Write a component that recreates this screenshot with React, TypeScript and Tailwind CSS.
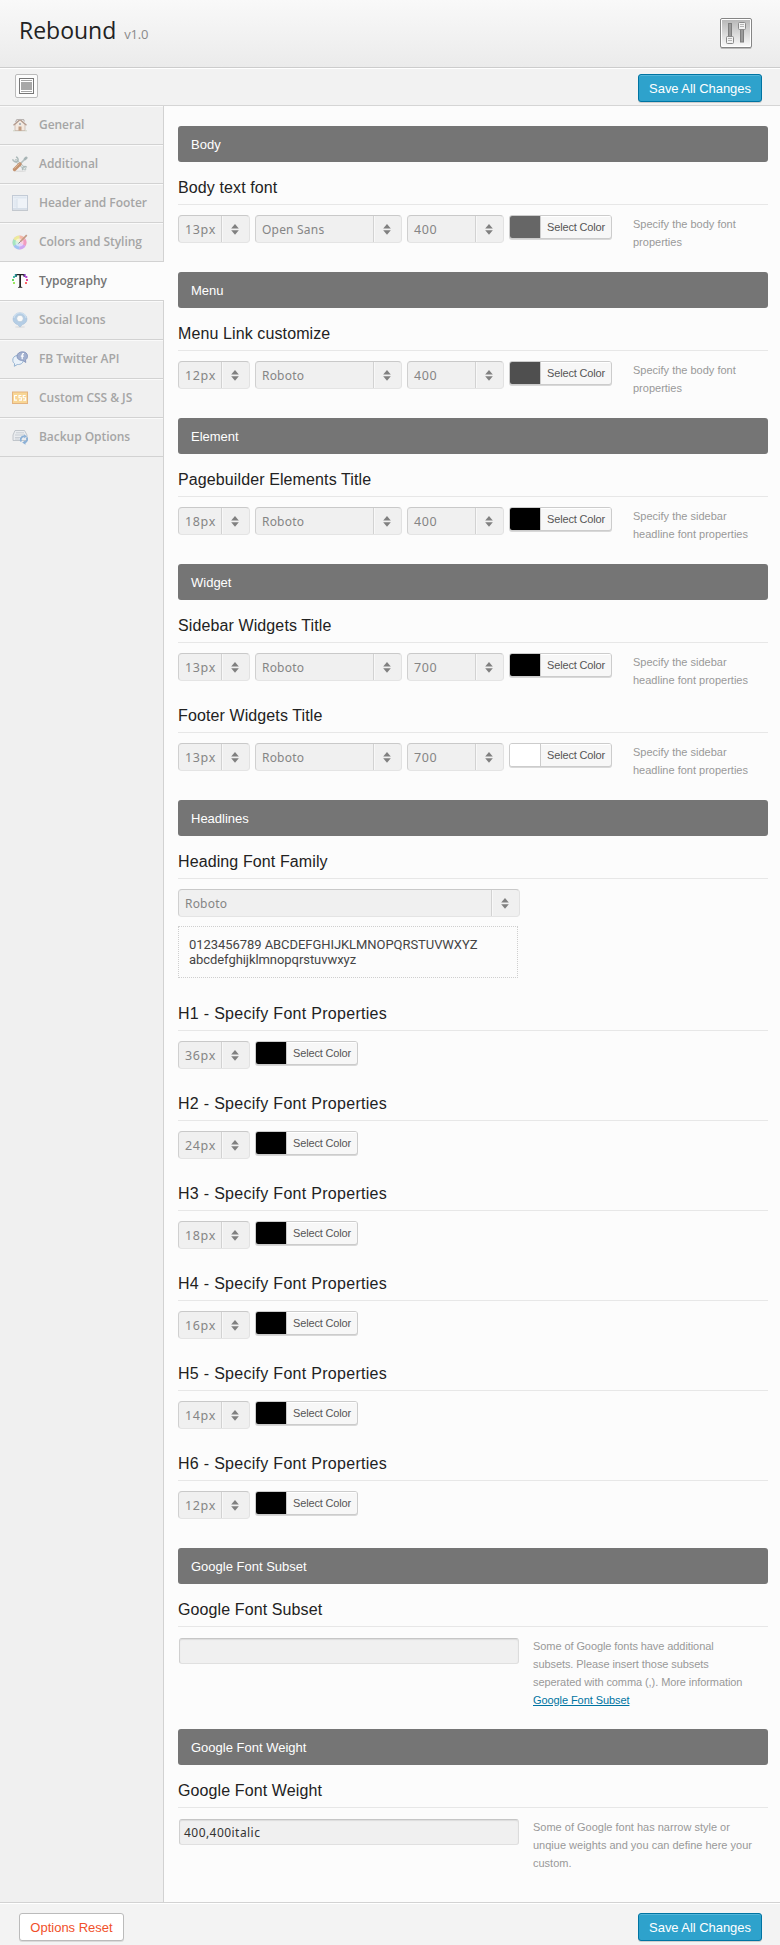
import React from "react";

const Svg = ({ children }: { children: React.ReactNode }) => (
  <svg width="16" height="16" viewBox="0 0 16 16" className="block shrink-0">
    {children}
  </svg>
);

const icons: Record<string, React.ReactNode> = {
  General: (
    <Svg>
      <rect x="1" y="13" width="14" height="1.4" fill="#d9ddd2" />
      <path d="M3 7.500 8 3l5 4.500V13.500H3z" fill="#f3e9e0" stroke="#c4b3a8" strokeWidth=".7" />
      <path d="M1.500 8.200 8 2.500l6.500 5.700" fill="none" stroke="#b39a8d" strokeWidth="1.300" />
      <path d="M3.500 5 5 2.500h6.500l1 2" fill="none" stroke="#b9b4b2" strokeWidth="1.200" />
      <rect x="6.500" y="9.500" width="3" height="4.200" fill="#c19c81" />
      <circle cx="8" cy="7" r="1" fill="#9aa6b3" />
    </Svg>
  ),
  Additional: (
    <Svg>
      <ellipse cx="8" cy="15.200" rx="6" ry=".7" fill="#dedede" />
      <path d="M4 4.500 13 13" stroke="#aebbbb" strokeWidth="2.600" strokeLinecap="round" />
      <path d="M4 4.500 13 13" stroke="#e2e8e7" strokeWidth="1.200" strokeLinecap="round" />
      <path d="M.8 3.200a2.800 2.800 0 0 0 5.200 1.300A2.800 2.800 0 0 0 4 1" fill="none" stroke="#adbaba" strokeWidth="1.500" />
      <path d="M11 14.200a2.300 2.300 0 0 1 3.700-2.800" fill="none" stroke="#adbaba" strokeWidth="1.300" />
      <path d="M13.800 2.200 8.500 7.500" stroke="#b4c0c1" strokeWidth="1.600" strokeLinecap="round" />
      <path d="M14.300 1.800 13 3" stroke="#a8b5b6" strokeWidth="2.600" strokeLinecap="round" />
      <path d="M8 8 2.500 13.500" stroke="#c3926f" strokeWidth="3.400" strokeLinecap="round" />
      <path d="M7.500 7.500 2.500 12.500" stroke="#dcb595" strokeWidth="1" />
    </Svg>
  ),
  "Header and Footer": (
    <Svg>
      <rect x=".5" y=".5" width="15" height="14.500" fill="#eff3f8" stroke="#c3cbd6" />
      <rect x="1.500" y="1.500" width="13" height="2" fill="#dfe7f0" />
      <rect x="1.500" y="4.500" width="3" height="8" fill="#e3eaf2" />
      <path d="M5 4v9M1 13.500h14" stroke="#cfd9e4" strokeWidth=".8" />
      <rect x="0" y="15" width="16" height="1" fill="#c3c8ce" />
    </Svg>
  ),
  "Colors and Styling": (
    <Svg>
      <circle cx="7.500" cy="8.500" r="7" fill="#e9c4e6" />
      <path d="M7.500 8.500V1.500a7 7 0 0 1 6 3.500z" fill="#f5b9a6" />
      <path d="M7.500 8.500 13.500 5a7 7 0 0 1 0 7z" fill="#f29cc0" />
      <path d="M7.500 8.500 13.500 12a7 7 0 0 1-6 3.500z" fill="#cda6f2" />
      <path d="M7.500 8.500v7A7 7 0 0 1 1.500 12z" fill="#a0c4f3" />
      <path d="M7.500 8.500 1.500 12a7 7 0 0 1 0-7z" fill="#a5e6bf" />
      <path d="M7.500 8.500 1.500 5a7 7 0 0 1 6-3.500z" fill="#eeeb9a" />
      <circle cx="7.500" cy="8.500" r="4" fill="#fff" opacity=".5" />
      <path d="M8.500 7.500 14.800 1.200" stroke="#c39a86" strokeWidth="1.700" />
      <path d="M6.500 9.500 8.700 7.300" stroke="#8a8a8a" strokeWidth="1" />
    </Svg>
  ),
  Typography: (
    <Svg>
      <path d="M4 1h8.500v2.800h-.8L11.200 2.300H9V13c0 .8.400 1 1.400 1.200v.6H6v-.6C7 14 7.300 13.800 7.300 13V2.300H5.200L4.700 3.800H4z" fill="#222" />
      <rect x="2.800" y="1" width="1.800" height="3" fill="#2b8f98" />
      <rect x="11.800" y="1" width="1.800" height="3" fill="#7d3bb0" />
      <rect x="1" y="3" width="2" height="2" fill="#4bb7a5" />
      <rect x="0" y="6" width="2" height="2" fill="#63d862" />
      <rect x="1" y="9" width="2" height="2" fill="#9ce65e" />
      <rect x="13.300" y="3" width="2" height="2" fill="#b543cf" />
      <rect x="14" y="6" width="2" height="2" fill="#e0479d" />
      <rect x="13" y="9" width="2" height="2" fill="#ff6464" />
    </Svg>
  ),
  "Social Icons": (
    <Svg>
      <ellipse cx="8" cy="15" rx="5" ry=".9" fill="#dfe0e2" />
      <path d="M8 .8a7 6.500 0 0 1 7 6.200c0 3-2.500 5-4.500 5.600L8 15l-2.500-2.400C3.500 12 1 10 1 7A7 6.500 0 0 1 8 .8z" fill="#b4cde5" stroke="#a6c0d9" strokeWidth=".6" />
      <path d="M2 6a6 5 0 0 1 12 0" fill="none" stroke="#cfe0ef" strokeWidth="1.200" />
      <circle cx="8" cy="6.500" r="3.300" fill="#fafafa" stroke="#a9bfd2" strokeWidth=".6" />
    </Svg>
  ),
  "FB Twitter API": (
    <Svg>
      <path d="M5 4.500C2 5 .6 7 .8 9.500c.1 1.500.8 2.500 1.800 3.200L2.300 15.300l3-1.800c3.500.3 6-1.500 6-4.500" fill="#e9f1f9" stroke="#94b2d1" strokeWidth="1" />
      <path d="M10.500.8c3 0 5 1.700 5 4.400 0 1.800-.8 3-2 3.600l.3 2.700-3-2.100C7.300 9.600 5 8 5 5.200 5 2.500 7.500.8 10.500.8z" fill="#a2b0cf" stroke="#7f8fb8" strokeWidth=".8" />
      <path d="M12 2.700h-.7c-.7 0-1.100.4-1.100 1.200V8.200M8.800 5.200h3" stroke="#fff" strokeWidth="1.200" fill="none" />
    </Svg>
  ),
  "Custom CSS & JS": (
    <Svg>
      <rect x=".5" y="2" width="15" height="11.500" fill="#f8d695" stroke="#e3b380" />
      <path d="M5 5.500H2.600v4.600H5M9.400 5.500H7v2.300h2.400v2.300H7M13.600 5.500h-2.400v2.300h2.400v2.300h-2.400" fill="none" stroke="#fff" strokeWidth="1.100" />
    </Svg>
  ),
  "Backup Options": (
    <Svg>
      <path d="M3 1.500h9.500l2.500 4.500v5.500H1V6z" fill="#eaecef" stroke="#bcc1c6" strokeWidth=".9" />
      <path d="M4 3.800h8M3 6h10M3 8.500h5M3 10h4" stroke="#c6ccd1" strokeWidth=".9" />
      <path d="M9.300 12.500a3.300 3.300 0 0 1 3-5.200M14.700 8.500a3.500 3.500 0 0 1-1.800 5" fill="none" stroke="#8bb0d6" strokeWidth="1.800" />
      <path d="m12 5.500 3 1.700-2.700 2zM13.500 11.300v4.500l-3.300-2.200z" fill="#8bb0d6" />
    </Svg>
  ),
};

const Updown = () => (
  <svg width="8" height="11" viewBox="0 0 8 11" className="mr-px block">
    <path d="M4 0 7.800 4.500H.2z" fill="#808080" />
    <path d="M4 10.800 7.800 6.300H.2z" fill="#808080" />
  </svg>
);

const Select = ({ value, width }: { value: string; width: string }) => (
  <div className={`${width} flex h-7 shrink-0 rounded-[4px] border border-t-[#c9c9c9] border-r-[#e2e2e2] border-b-[#e4e4e4] border-l-[#d0d0d0] bg-[#f0f0f0]`}>
    <div
      className={
        /^\d/.test(value)
          ? "flex-1 overflow-hidden pt-[1px] pl-[6px] font-['Noto_Sans',sans-serif] text-[12.5px] leading-[25px] tracking-[0.65px] whitespace-nowrap text-[#858585]"
          : "flex-1 overflow-hidden pt-[1px] pl-[6px] font-['Noto_Sans',sans-serif] text-[12px] leading-[25px] tracking-[0.2px] whitespace-nowrap text-[#858585]"
      }
    >
      {value}
    </div>
    <div className="flex w-[28px] shrink-0 items-center justify-center border-l border-[#d2d2d2] shadow-[inset_1px_0_0_#f8f8f8]">
      <Updown />
    </div>
  </div>
);

const ColorButton = ({ swatch }: { swatch: string }) => (
  <div className="flex h-6 w-[103px] shrink-0 overflow-hidden rounded-[3px] border border-[#cccccc] bg-[#f7f7f7] shadow-[0_1px_0_#d8d8d8]">
    <div className={`${swatch} w-[30px]`} />
    <div className="flex-1 border-l border-[#cccccc] pl-[6px] text-[11px] leading-[22px] tracking-[-0.16px] whitespace-nowrap text-[#555] shadow-[inset_0_1px_0_#fff]">
      Select Color
    </div>
  </div>
);

const Bar = ({ children }: { children: React.ReactNode }) => (
  <div className="h-9 rounded-[3px] bg-[#757575] pt-px pl-[13px] text-[13px] leading-[36px] text-white">{children}</div>
);

const Title = ({ children, wide = false }: { children: React.ReactNode; wide?: boolean }) => (
  <h3 className={wide ? "h-[43px] border-b border-[#e7e7e7] pt-[14px] text-base leading-[24px] tracking-[0.29px] text-[#222]" : "h-[43px] border-b border-[#e7e7e7] pt-[14px] text-base leading-[24px] tracking-[0.11px] text-[#222]"}>
    {children}
  </h3>
);

const FontRow = ({ title, size, font, weight, swatch, note }: { title: string; size: string; font: string; weight: string; swatch: string; note: string }) => (
  <div>
    <Title>{title}</Title>
    <div className="flex h-[47px] items-start pt-[10px]">
      <div className="flex gap-[5px]">
        <Select value={size} width="w-[72px]" />
        <Select value={font} width="w-[147px]" />
        <Select value={weight} width="w-[97px]" />
        <ColorButton swatch={swatch} />
      </div>
      <p className="ml-[21px] w-[125px] text-[11px] leading-[18px] text-[#999]">{note}</p>
    </div>
  </div>
);

const SaveButton = () => (
  <button className="h-7 w-[124px] rounded-[3px] border border-[#0074a2] bg-[#2ea2cc] pt-px text-[13px] leading-[26px] tracking-[-0.05px] whitespace-nowrap text-white shadow-[inset_0_1px_0_rgba(120,200,230,0.5),0_1px_0_rgba(0,0,0,0.15)]">
    Save All Changes
  </button>
);

const navItems = ["General", "Additional", "Header and Footer", "Colors and Styling", "Typography", "Social Icons", "FB Twitter API", "Custom CSS & JS", "Backup Options"];

const headings = [
  ["H1", "36px"],
  ["H2", "24px"],
  ["H3", "18px"],
  ["H4", "16px"],
  ["H5", "14px"],
  ["H6", "12px"],
];

export default function App() {
  return (
    <div className="flex h-[1945px] w-[780px] flex-col overflow-hidden bg-[#fcfcfc] font-['Liberation_Sans',Arial,sans-serif]">
      <header className="flex h-[68px] shrink-0 items-start justify-between border-b border-[#cccccc] bg-linear-to-b from-[#f9f9f9] to-[#ebebeb] pr-[28px] pl-[19px]">
        <div className="flex items-baseline gap-[8px] pt-[13px] font-['Open_Sans',sans-serif]">
          <h1 className="text-[23px] leading-[34px] text-[#222]">Rebound</h1>
          <span className="text-[13px] tracking-[-0.2px] text-[#8a8a8a]">v1.0</span>
        </div>
        <svg width="32" height="32" viewBox="0 0 32 32" className="mt-[18px] block">
          <defs>
            <linearGradient id="panel" x1="0" y1="0" x2="0" y2="1">
              <stop offset="0" stopColor="#b8b8b8" />
              <stop offset="1" stopColor="#f8f8f8" />
            </linearGradient>
          </defs>
          <rect x=".5" y="1" width="31" height="30" rx="1.500" fill="#bbb" />
          <rect x=".5" y=".5" width="31" height="29" rx="1.500" fill="#fff" stroke="#858585" />
          <rect x="2" y="2" width="28" height="26" fill="url(#panel)" />
          <rect x="8.500" y="5.500" width="3" height="13" fill="#9a9a9a" stroke="#7d7d7d" />
          <rect x="6.500" y="18.500" width="7" height="7" rx="1" fill="#f2f2f2" stroke="#8a8a8a" />
          <path d="M8 20.500h4M8 22.500h4" stroke="#b5b5b5" />
          <rect x="20.500" y="11.500" width="3" height="12.500" fill="#9a9a9a" stroke="#7d7d7d" />
          <rect x="18.500" y="4.500" width="7" height="7" rx="1" fill="#f2f2f2" stroke="#8a8a8a" />
          <path d="M20 6.500h4M20 8.500h4" stroke="#b5b5b5" />
        </svg>
      </header>
      <div className="flex h-[38px] shrink-0 items-start justify-between border-b border-[#d5d5d5] bg-[#f2f2f2] pt-[6px] pr-[18px] pl-[15px] shadow-[inset_0_1px_0_#fff]">
        <svg width="23" height="24" viewBox="0 0 23 24" className="block">
          <rect x=".5" y=".5" width="22" height="23" rx="1.500" fill="#fcfcfc" stroke="#bbb" />
          <rect x="4.500" y="4.500" width="14" height="15" fill="#fff" stroke="#777" />
          <path d="M6 6.500h11M6 17.500h11" stroke="#a5a5a5" />
          <rect x="6" y="8" width="11" height="8" fill="#a8a8a8" />
        </svg>
        <SaveButton />
      </div>
      <div className="flex min-h-0 flex-1">
        <nav className="w-[164px] shrink-0 border-r border-[#d2d2d2] bg-[#f0f0f0]">
          {navItems.map((item) => (
            <a
              key={item}
              className={
                item === "Typography"
                  ? "-mr-px flex h-[39px] items-center border-b border-[#d2d2d2] bg-[#fcfcfc] pl-[12px] text-[#757575]"
                  : "flex h-[39px] items-center border-b border-[#d2d2d2] pl-[12px] text-[#a5a5a5] shadow-[inset_0_1px_0_#fafafa]"
              }
            >
              {icons[item]}
              <span className="ml-[11px] font-['Open_Sans',sans-serif] text-[12px] leading-[18px] font-semibold tracking-[-0.04px] whitespace-nowrap">{item}</span>
            </a>
          ))}
        </nav>
        <main className="flex-1 pt-[20px] pr-[12px] pl-[14px]">
          <section className="pb-[20px]">
            <Bar>Body</Bar>
            <FontRow title="Body text font" size="13px" font="Open Sans" weight="400" swatch="bg-[#666666]" note="Specify the body font properties" />
          </section>
          <section className="pb-[20px]">
            <Bar>Menu</Bar>
            <FontRow title="Menu Link customize" size="12px" font="Roboto" weight="400" swatch="bg-[#4f4f4f]" note="Specify the body font properties" />
          </section>
          <section className="pb-[20px]">
            <Bar>Element</Bar>
            <FontRow title="Pagebuilder Elements Title" size="18px" font="Roboto" weight="400" swatch="bg-black" note="Specify the sidebar headline font properties" />
          </section>
          <section className="pb-[20px]">
            <Bar>Widget</Bar>
            <FontRow title="Sidebar Widgets Title" size="13px" font="Roboto" weight="700" swatch="bg-black" note="Specify the sidebar headline font properties" />
            <FontRow title="Footer Widgets Title" size="13px" font="Roboto" weight="700" swatch="bg-white" note="Specify the sidebar headline font properties" />
          </section>
          <section className="pb-[20px]">
            <Bar>Headlines</Bar>
            <Title>Heading Font Family</Title>
            <div className="h-[109px] pt-[10px]">
              <Select value="Roboto" width="w-[342px]" />
              <div className="mt-[9px] h-[52px] w-[340px] border border-dotted border-[#cfcfcf] pt-[10px] pl-[10px] font-['Roboto',sans-serif] text-[13px] leading-[15px] tracking-[-0.06px] text-[#444]">
                0123456789 ABCDEFGHIJKLMNOPQRSTUVWXYZ
                <br />
                abcdefghijklmnopqrstuvwxyz
              </div>
            </div>
            {headings.map(([name, size]) => (
              <div key={name}>
                <Title wide>{name} - Specify Font Properties</Title>
                <div className="flex h-[47px] gap-[5px] pt-[10px]">
                  <Select value={size} width="w-[72px]" />
                  <ColorButton swatch="bg-black" />
                </div>
              </div>
            ))}
          </section>
          <section className="pb-[20px]">
            <Bar>Google Font Subset</Bar>
            <Title>Google Font Subset</Title>
            <div className="flex h-[82px] items-start pt-[10px]">
              <div className="mt-px ml-px h-[26px] w-[340px] shrink-0 rounded-[3px] border border-t-[#c6c6c6] border-r-[#dcdcdc] border-b-[#e0e0e0] border-l-[#d0d0d0] bg-[#f0f0f0] shadow-[inset_0_1px_1px_#dcdcdc]" />
              <p className="ml-[14px] w-[230px] text-[11px] leading-[18px] tracking-[-0.08px] text-[#999]">
                Some of Google fonts have additional
                <br />
                subsets. Please insert those subsets
                <br />
                seperated with comma (,). More information
                <br />
                <a className="text-[#0074a2] underline">Google Font Subset</a>
              </p>
            </div>
          </section>
          <section>
            <Bar>Google Font Weight</Bar>
            <Title>Google Font Weight</Title>
            <div className="flex items-start pt-[10px]">
              <div className="mt-px ml-px h-[26px] w-[340px] shrink-0 rounded-[3px] border border-t-[#c6c6c6] border-r-[#dcdcdc] border-b-[#e0e0e0] border-l-[#d0d0d0] bg-[#f0f0f0] pt-px pl-[4px] font-['Noto_Sans',sans-serif] text-[12px] leading-[24px] tracking-[0.45px] text-[#333] shadow-[inset_0_1px_1px_#dcdcdc]">
                400,400italic
              </div>
              <p className="ml-[14px] w-[230px] text-[11px] leading-[18px] text-[#999]">
                Some of Google font has narrow style or
                <br />
                unqiue weights and you can define here your
                <br />
                custom.
              </p>
            </div>
          </section>
        </main>
      </div>
      <footer className="flex h-[43px] shrink-0 items-start justify-between border-t border-[#d2d2d2] bg-[#f3f3f3] pt-[10px] pr-[18px] pl-[19px] shadow-[inset_0_1px_0_#fff]">
        <button className="h-7 w-[105px] rounded-[3px] border border-[#bbb] bg-white pt-px text-[13px] leading-[26px] whitespace-nowrap text-[#f1502a] shadow-[0_1px_0_rgba(0,0,0,0.1)]">Options Reset</button>
        <SaveButton />
      </footer>
    </div>
  );
}
